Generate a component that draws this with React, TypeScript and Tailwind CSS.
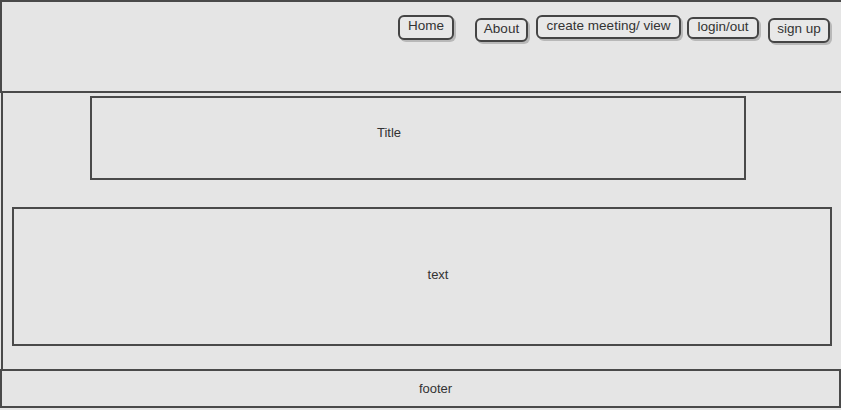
const navItems = [
  { label: "Home", className: "ml-0 mt-[13px] w-[56px] h-[25px]" },
  { label: "About", className: "ml-[21px] mt-[16px] w-[53px] h-[24px]" },
  { label: "create meeting/ view", className: "ml-[8px] mt-[13px] w-[145px] h-[24px]" },
  { label: "login/out", className: "ml-[6px] mt-[15px] w-[72px] h-[22px]" },
  { label: "sign up", className: "ml-[9px] mt-[16px] w-[62px] h-[25px]" },
];

const App = () => {
  return (
    <div
      className="w-[841px] h-[410px] bg-[#e5e5e5] text-[#333] overflow-hidden"
      style={{ fontFamily: '"Liberation Sans", Arial, sans-serif' }}
    >
      {/* header */}
      <header className="h-[93px] border-t-2 border-l-2 border-b-2 border-[#4a4a4a] flex justify-end items-start pr-[11px]">
        {navItems.map((item) => (
          <button
            key={item.label}
            className={`${item.className} flex items-center justify-center pb-[3px] border-2 border-[#444] rounded-[6px] bg-[#e8e8e8] shadow-[2px_2px_0_#b8b8b8] text-[13.5px] leading-none text-[#333]`}
          >
            {item.label}
          </button>
        ))}
      </header>

      {/* main */}
      <main className="h-[276px] ml-[1px] border-l-2 border-[#4a4a4a] pt-[3px] flex flex-col">
        <div className="ml-[87px] w-[656px] h-[84px] border-2 border-[#4a4a4a] flex items-center justify-center pr-[58px] pb-[11px] text-[13px]">
          Title
        </div>
        <div className="ml-[9px] mt-[27px] w-[820px] h-[139px] border-2 border-[#4a4a4a] flex items-center justify-center pl-[32px] pb-[4px] text-[13px]">
          text
        </div>
      </main>

      {/* footer */}
      <footer className="w-[841px] h-[39px] border-2 border-[#4a4a4a] flex items-center justify-center pl-[30px] text-[13px]">
        footer
      </footer>
    </div>
  );
};

export default App;
